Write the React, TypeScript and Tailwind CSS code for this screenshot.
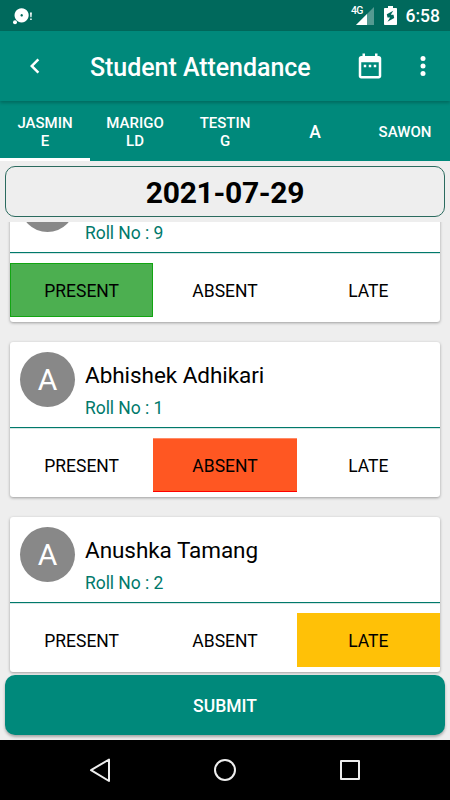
import React, { useState } from "react";

type Status = "PRESENT" | "ABSENT" | "LATE";

interface Student {
  name: string;
  roll: number;
  status: Status;
}

const STATUSES: Status[] = ["PRESENT", "ABSENT", "LATE"];

const ACTIVE: Record<Status, string> = {
  PRESENT: "bg-[#4caf50] shadow-[inset_0_0_0_1px_#12a512]",
  ABSENT: "bg-[#ff5722] shadow-[inset_0_-1px_0_#ff0000,inset_0_1px_0_#ff8a65]",
  LATE: "bg-[#ffc107]",
};

const STUDENTS: Student[] = [
  { name: "", roll: 9, status: "PRESENT" },
  { name: "Abhishek Adhikari", roll: 1, status: "ABSENT" },
  { name: "Anushka Tamang", roll: 2, status: "LATE" },
];

const TABS = [
  { lines: ["JASMIN", "E"], size: "text-[15px]" },
  { lines: ["MARIGO", "LD"], size: "text-[15px]" },
  { lines: ["TESTIN", "G"], size: "text-[15px]" },
  { lines: ["A"], size: "text-[17.5px]" },
  { lines: ["SAWON"], size: "text-[15px]" },
];

const StatusBar = () => (
  <div className="h-[31px] shrink-0 bg-[#00695c] flex items-center justify-between pl-3 pr-[10px] text-white">
    <svg width="22" height="20" viewBox="0 0 22 20" fill="#fff">
      <path fillRule="evenodd" d="M9.6 2.2a7.1 7.1 0 1 0 .01 0ZM9.7 8.1a1.2 1.2 0 1 1-.01 0Z" />
      <circle cx="3" cy="16.2" r="2" />
      <path d="M18 6.4h1.9l-.4 4.8h-1.1ZM18.2 12.6h1.5v1.5h-1.5Z" />
    </svg>
    <div className="flex items-center">
      <span className="text-[10.5px] font-medium leading-none tracking-[-0.7px] w-[5px] -mt-[9px]">4G</span>
      <svg width="18" height="18" viewBox="0 0 18 18" className="mt-px">
        <path d="M0 18 18 0v18Z" fill="#fff" opacity=".33" />
        <path d="M0 18 11 7v11Z" fill="#fff" />
      </svg>
      <svg width="13" height="19" viewBox="0 0 13 19" className="ml-[10px]">
        <path d="M4 0h5v2h3.2q.8 0 .8.8v15.4q0 .8-.8.8H.8q-.8 0-.8-.8V2.8q0-.8.8-.8H4Z" fill="#fff" />
        <path d="M9.3 4.8 2.8 8.2l.7 3.3h2.6l-2.6 4.3 6.7-3.7-.7-3.4H6.8Z" fill="#00695c" />
      </svg>
      <span className="ml-[8.5px] text-[17.5px] font-medium leading-none mt-[3px]">6:58</span>
    </div>
  </div>
);

const AppBar = () => (
  <header className="relative z-10 h-[70px] shrink-0 bg-[#00897b] shadow-[0_2px_3px_rgba(0,0,0,0.22)] flex items-center text-white">
    <button className="w-[70px] flex justify-center">
      <svg width="30" height="30" viewBox="0 0 24 24" fill="#fff">
        <path d="M15.41 7.41 14 6l-6 6 6 6 1.41-1.41L10.83 12Z" />
      </svg>
    </button>
    <h1 className="ml-5 mt-[3px] grow text-[25px] font-medium leading-[30px] tracking-[-0.05px]">Student Attendance</h1>
    <button className="mr-[23px]">
      <svg width="30" height="30" viewBox="0 0 24 24" fill="#fff">
        <path d="M9 11H7v2h2v-2zm4 0h-2v2h2v-2zm4 0h-2v2h2v-2zm2-7h-1V2h-2v2H8V2H6v2H5c-1.11 0-1.99.9-1.99 2L3 20c0 1.1.89 2 2 2h14c1.1 0 2-.9 2-2V6c0-1.1-.9-2-2-2zm0 16H5V9h14v11z" />
      </svg>
    </button>
    <button className="mr-[12.5px]">
      <svg width="30" height="30" viewBox="0 0 24 24" fill="#fff">
        <circle cx="12" cy="6" r="2" />
        <circle cx="12" cy="12" r="2" />
        <circle cx="12" cy="18" r="2" />
      </svg>
    </button>
  </header>
);

interface StudentCardProps {
  student: Student;
  onChange: (status: Status) => void;
}

const StudentCard: React.FC<StudentCardProps> = ({ student, onChange }) => (
  <article className="h-[155px] shrink-0 rounded-[3px] bg-white shadow-[0_1px_3px_rgba(0,0,0,0.35)]">
    <div className="h-[86px] flex border-b border-[#00796b] shadow-[0_1px_0_#d5e6e4] pl-[10px] pt-[10px]">
      <div className="size-[55px] rounded-full bg-[#888888] text-white text-[30px] leading-[56px] text-center">
        {student.name[0]}
      </div>
      <div className="ml-[10px] pt-[9px]">
        <div className="h-[28px] text-[22.5px] leading-[28px] tracking-[-0.05px] text-black">{student.name}</div>
        <div className="mt-[9px] text-[17.5px] leading-[21px] tracking-[-0.05px] text-[#00796b]">Roll No : {student.roll}</div>
      </div>
    </div>
    <div className="mt-[10px] grid grid-cols-3">
      {STATUSES.map((status) => (
        <button
          key={status}
          onClick={() => onChange(status)}
          className={`h-[54px] pt-[2px] flex items-center justify-center text-[17.5px] text-black ${student.status === status ? ACTIVE[status] : ""}`}
        >
          {status}
        </button>
      ))}
    </div>
  </article>
);

const App = () => {
  const [students, setStudents] = useState(STUDENTS);
  const [tab, setTab] = useState(0);

  const setStatus = (roll: number, status: Status) =>
    setStudents((list) => list.map((s) => (s.roll === roll ? { ...s, status } : s)));

  return (
    <div className="w-[450px] h-[800px] flex flex-col overflow-hidden bg-[#eeeeee] font-[Roboto,sans-serif]">
      <StatusBar />
      <AppBar />

      {/* Class tabs */}
      <nav className="h-[60px] shrink-0 grid grid-cols-5 bg-[#00897b] text-white font-medium">
        {TABS.map((t, i) => (
          <button
            key={i}
            onClick={() => setTab(i)}
            className={`flex flex-col items-center justify-center pt-[5px] leading-[18px] border-b-[3px] ${t.size} ${tab === i ? "border-white" : "border-transparent"}`}
          >
            {t.lines.map((line) => (
              <span key={line}>{line}</span>
            ))}
          </button>
        ))}
      </nav>

      <div className="mx-[5px] mt-[5px] pt-[2px] h-[51px] shrink-0 rounded-[10px] border border-[#2b6b5f] flex items-center justify-center text-[30px] font-bold tracking-[-0.3px] text-black">
        2021-07-29
      </div>

      {/* Student list, scrolled past the first header */}
      <main className="mt-[5px] h-[453px] shrink-0 overflow-hidden px-[10px]">
        <div className="-mt-[55px] flex flex-col gap-5">
          {students.map((s) => (
            <StudentCard key={s.roll} student={s} onChange={(status) => setStatus(s.roll, status)} />
          ))}
        </div>
      </main>

      <button className="mx-[5px] h-[60px] pt-[2px] shrink-0 rounded-[10px] bg-[#00897b] text-white text-[17.5px] font-medium shadow-[0_2px_3px_rgba(0,0,0,0.3)]">
        SUBMIT
      </button>

      <footer className="mt-[5px] h-[60px] shrink-0 bg-black flex items-center justify-center gap-[95px]">
        <svg width="30" height="30" viewBox="0 0 30 30" fill="none" stroke="#eee" strokeWidth="2" strokeLinejoin="round">
          <path d="M24 4.5v21.5L6 15.2Z" />
        </svg>
        <svg width="30" height="30" viewBox="0 0 30 30" fill="none" stroke="#eee" strokeWidth="2">
          <circle cx="15" cy="15" r="10" />
        </svg>
        <svg width="30" height="30" viewBox="0 0 30 30" fill="none" stroke="#eee" strokeWidth="2" strokeLinejoin="round">
          <rect x="6" y="6" width="18" height="18" />
        </svg>
      </footer>
    </div>
  );
};

export default App;
